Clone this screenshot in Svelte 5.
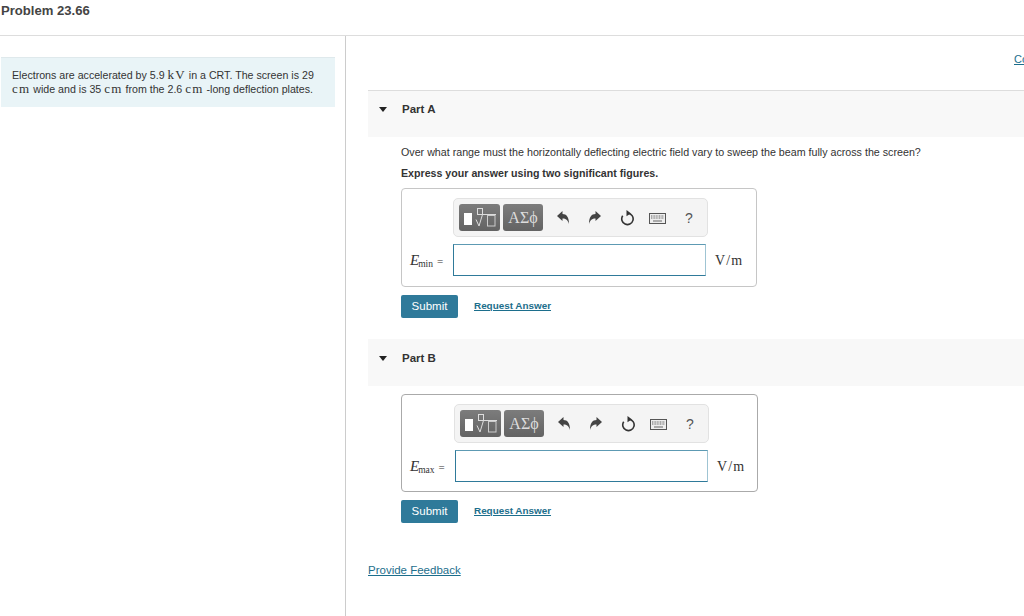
<script>
  // Both parts share the same answer box, only the label and offsets differ
  const parts = [
    {
      name: 'Part A',
      question: 'Over what range must the horizontally deflecting electric field vary to sweep the beam fully across the screen?',
      hint: 'Express your answer using two significant figures.',
      sub: 'min'
    },
    { name: 'Part B', sub: 'max' }
  ];
</script>

<div class="page">
  <header class="top">
    <h1>Problem 23.66</h1>
  </header>

  <div class="columns">
    <aside class="left">
      <div class="intro">
        Electrons are accelerated by 5.9 <span class="math">kV</span> in a CRT. The screen is 29
        <span class="math">cm</span> wide and is 35 <span class="math">cm</span> from the 2.6 <span class="math">cm</span> -long deflection plates.
      </div>
    </aside>

    <main class="right">
      <div class="constants"><a href="#c">Constants</a></div>

      {#each parts as part}
        <section class="part" class:second={part.sub === 'max'}>
          <div class="part-head">
            <span class="caret"></span>
            <h2>{part.name}</h2>
          </div>

          <div class="part-body">
            {#if part.question}
              <p class="question">{part.question}</p>
              <p class="hint">{part.hint}</p>
            {/if}

            <div class="answer">
              <div class="toolbar">
                <button class="tool" aria-label="Templates">
                  <svg width="41" height="27" viewBox="0 0 41 27">
                    <rect x="5" y="9" width="8" height="12" fill="#fff" />
                    <rect x="18.500" y="4.500" width="5" height="6" fill="none" stroke="#ddd" />
                    <path d="M17 15.500l3 6.500 3.500-11.500H37" fill="none" stroke="#ddd" />
                    <rect x="28.500" y="11.500" width="7.500" height="10.500" fill="none" stroke="#ccc" />
                  </svg>
                </button>
                <button class="tool greek">ΑΣϕ</button>

                <svg class="icon undo" width="12" height="13" viewBox="0 0 12 13">
                  <path d="M0 5L5.500 0v3c4 0 6.500 3 6.500 10-1.300-4-3-5.500-6.500-5.500V10z" fill="#444" />
                </svg>
                <svg class="icon redo" width="12" height="13" viewBox="0 0 12 13">
                  <path d="M12 5L6.500 0v3C2.500 3 0 6 0 13c1.300-4 3-5.500 6.500-5.500V10z" fill="#444" />
                </svg>
                <svg class="icon reset" width="14" height="16" viewBox="0 0 14 16">
                  <path d="M8 3.200a5.700 5.700 0 1 1-5.300 2.500" fill="none" stroke="#333" stroke-width="1.600" />
                  <path d="M6.500 0l4.300 3.200L6.500 6.200z" fill="#333" />
                </svg>
                <svg class="icon keys" width="17" height="11" viewBox="0 0 17 11">
                  <rect x=".5" y=".5" width="16" height="10" fill="#eee" stroke="#555" />
                  <path d="M2 3h13M2 5h13" stroke="#666" stroke-dasharray="1 .6" />
                  <path d="M4 8h9" stroke="#666" />
                </svg>
                <span class="help">?</span>
              </div>

              <div class="entry">
                <span class="label"><i>E</i><sub>{part.sub}</sub> <span class="eq">=</span></span>
                <input type="text" aria-label="E {part.sub}" />
                <span class="unit">V/m</span>
              </div>
            </div>

            <div class="actions">
              <button class="submit">Submit</button>
              <a class="request" href="#r">Request Answer</a>
            </div>
          </div>
        </section>
      {/each}

      <a class="feedback" href="#f">Provide Feedback</a>
    </main>
  </div>
</div>

<style>
  :global(body) {
    margin: 0;
    background: #fff;
    overflow: hidden;
  }

  .page {
    width: 1024px;
    height: 616px;
    overflow: hidden;
    font-family: "Liberation Sans", Arial, sans-serif;
    color: #333;
  }

  .top {
    height: 36px;
    box-sizing: border-box;
    border-bottom: 1px solid #ddd;
    padding: 3px 0 0 1px;
  }

  h1 {
    margin: 0;
    font-size: 13.100px;
    line-height: 16px;
    font-weight: bold;
    color: #444;
  }

  .columns {
    display: flex;
    height: 580px;
  }

  .left {
    width: 346px;
    box-sizing: border-box;
    border-right: 1px solid #ccc;
    padding: 21px 10px 0 1px;
    flex: none;
  }

  .intro {
    height: 50px;
    box-sizing: border-box;
    background: #e9f4f7;
    border-top: 1px solid #dfe9ec;
    padding: 11px 0 0 11px;
    font-size: 10.650px;
    line-height: 13.500px;
    color: #333;
  }

  .math {
    font-family: "Liberation Serif", serif;
    font-size: 13px;
    line-height: 0;
    letter-spacing: 1.200px;
  }

  .right {
    flex: 1;
    min-width: 0;
    padding-left: 22px;
  }

  .constants {
    height: 54px;
    box-sizing: border-box;
    padding: 16px 0 0 646px;
    font-size: 11px;
    line-height: 14px;
    white-space: nowrap;
    overflow: hidden;
  }

  a {
    color: #1c6e8c;
  }

  .part-head {
    height: 47px;
    box-sizing: border-box;
    background: #f8f8f8;
    border-top: 1px solid #ddd;
    display: flex;
    align-items: flex-start;
    padding: 11px 0 0 11px;
  }

  .second .part-head {
    border-top: none;
    padding-top: 12px;
  }

  .caret {
    width: 0;
    height: 0;
    border-left: 4px solid transparent;
    border-right: 4px solid transparent;
    border-top: 5px solid #222;
    margin: 5px 15px 0 0;
  }

  h2 {
    margin: 0;
    font-size: 11.500px;
    line-height: 15px;
    font-weight: bold;
    color: #333;
  }

  .part-body {
    padding-left: 33px;
  }

  .question {
    margin: 9px 0 0;
    font-size: 10.700px;
    line-height: 13px;
    color: #333;
    white-space: nowrap;
  }

  .hint {
    margin: 8px 0 0;
    font-size: 10.650px;
    line-height: 13px;
    font-weight: bold;
    color: #333;
  }

  .answer {
    width: 356px;
    height: 99px;
    box-sizing: border-box;
    margin-top: 8px;
    border: 1px solid #c6c6c6;
    border-radius: 4px;
    padding: 9px 0 0 51px;
  }

  .second .answer {
    width: 357px;
    height: 98px;
    margin-top: 8px;
    border-color: #aaa;
    padding: 9px 0 0 52px;
  }

  .toolbar {
    width: 255px;
    height: 39px;
    box-sizing: border-box;
    background: #f4f4f4;
    border: 1px solid #e2e2e2;
    border-radius: 5px;
    display: flex;
    align-items: center;
    padding-left: 5px;
  }

  .tool {
    width: 41px;
    height: 27px;
    margin-right: 3px;
    padding: 0;
    border: none;
    border-radius: 3px;
    background: linear-gradient(#7c7c7c, #636363);
    color: #ddd;
    display: flex;
    align-items: center;
    justify-content: center;
  }

  .greek {
    width: 40px;
    font-family: "Liberation Serif", serif;
    font-size: 16px;
  }

  .icon {
    flex: none;
  }

  .undo {
    margin-left: 11px;
  }

  .redo {
    margin-left: 20px;
  }

  .reset {
    margin-left: 19px;
  }

  .keys {
    margin-left: 15px;
    margin-top: 2px;
  }

  .help {
    margin-left: 19px;
    font-size: 14px;
    color: #555;
  }

  .entry {
    display: flex;
    align-items: center;
    margin: 7px 0 0 -51px;
    height: 32px;
  }

  .second .entry {
    margin-left: -52px;
  }

  .label {
    width: 51px;
    flex: none;
    box-sizing: border-box;
    padding-left: 8px;
    font-family: "Liberation Serif", serif;
    font-size: 12px;
    white-space: nowrap;
    color: #333;
  }

  .second .label {
    width: 53px;
  }

  .label i {
    font-size: 15px;
  }

  .label sub {
    font-size: 9.500px;
    vertical-align: -2px;
    line-height: 0;
    margin-left: -1px;
  }

  .eq {
    font-size: 11px;
    margin-left: 1px;
  }

  input {
    width: 253px;
    height: 32px;
    flex: none;
    box-sizing: border-box;
    padding: 0;
    border: 1px solid #2f7a9a;
    border-top-color: #5d9ab3;
    border-right-color: #9fc4d3;
    border-radius: 0;
    outline: none;
    background: #fff;
  }

  .unit {
    margin-left: 9px;
    font-family: "Liberation Serif", serif;
    font-size: 14px;
    letter-spacing: 1.100px;
    color: #333;
    padding-top: 1px;
  }

  .actions {
    display: flex;
    align-items: center;
    margin-top: 8px;
    height: 23px;
  }

  .submit {
    width: 57px;
    height: 23px;
    padding: 0 0 2px;
    border: none;
    border-radius: 2px;
    background: #2f7a9a;
    color: #fff;
    font-family: "Liberation Sans", Arial, sans-serif;
    font-size: 11.500px;
  }

  .request {
    margin-left: 16px;
    margin-bottom: 2px;
    font-size: 9.900px;
    font-weight: bold;
  }

  .feedback {
    display: inline-block;
    margin-top: 40px;
    font-size: 11.500px;
    line-height: 15px;
  }

  .second {
    margin-top: 21px;
  }
</style>
